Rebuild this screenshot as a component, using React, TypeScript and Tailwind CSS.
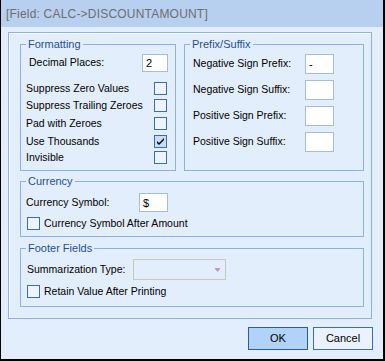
import React from "react";

const Check = ({ checked }: { checked?: boolean }) => (
  <div
    className={
      "w-[13px] h-[13px] border border-[#3a6ea5] flex items-center justify-center shrink-0 " +
      (checked ? "bg-[#c6dbf6]" : "bg-[#eef4fd]")
    }
  >
    {checked && (
      <svg width="9" height="9" viewBox="0 0 9 9">
        <path d="M1 4 L3 6 L8 1 L8 3 L3 8 L1 6 Z" fill="#000" />
      </svg>
    )}
  </div>
);

const Legend = ({ children }: { children: React.ReactNode }) => (
  <legend className="ml-[5px] px-[2px] text-[11px] leading-[13px] text-[#1f4f8e]">{children}</legend>
);

const Box = ({ w, h, v }: { w: string; h: string; v?: string }) => (
  <div className={`${w} ${h} bg-white border border-[#a8bcd6] text-[11px] leading-[16px] pl-[3px] flex items-center`}>{v}</div>
);

export default function App() {
  const fmtRows: [string, boolean, string][] = [
    ["Suppress Zero Values", false, "mt-[10px]"],
    ["Suppress Trailing Zeroes", false, "mt-[4px]"],
    ["Pad with Zeroes", false, "mt-[5px]"],
    ["Use Thousands", true, "mt-[5px]"],
    ["Invisible", false, "mt-[3px]"],
  ];
  const psRows: [string, string, string][] = [
    ["Negative Sign Prefix:", "-", "mt-[3px]"],
    ["Negative Sign Suffix:", "", "mt-[6px]"],
    ["Positive Sign Prefix:", "", "mt-[6px]"],
    ["Positive Sign Suffix:", "", "mt-[6px]"],
  ];
  return (
    <div className="w-[385px] h-[361px] bg-[#e3eefd] border-l border-r-2 border-b-2 border-black flex flex-col font-['Liberation_Sans',Arial,sans-serif] text-black">
      <div className="h-[27px] shrink-0 bg-[#b7d0f0] pl-[5px] flex items-center text-[12px] tracking-[0.2px] text-[#6e6e6e]">
        [Field: CALC-&gt;DISCOUNTAMOUNT]
      </div>
      <div className="pl-[7px] pt-[5px]">
        <div className="w-[364px] h-[287px] border border-[#8fb0e2] shadow-[inset_1px_1px_0_#ffffff] pl-[11px] pt-[5px] flex flex-col">
          <div className="flex gap-[8px]">
            <fieldset className="w-[156px] h-[133px] border border-[#8fb0e2]">
              <Legend>Formatting</Legend>
              <div className="mt-[3px] h-[18px] flex items-center justify-between pl-[8px] pr-[7px] text-[10.5px]">
                <span>Decimal Places:</span>
                <Box w="w-[26px]" h="h-[18px]" v="2" />
              </div>
              {fmtRows.map(([label, c, mt]) => (
                <div key={label} className={`${mt} h-[13px] flex items-center justify-between pl-[5px] pr-[8px] text-[10.5px] leading-[13px]`}>
                  <span>{label}</span>
                  <Check checked={c} />
                </div>
              ))}
            </fieldset>
            <fieldset className="w-[180px] h-[133px] border border-[#8fb0e2]">
              <Legend>Prefix/Suffix</Legend>
              {psRows.map(([label, v, mt]) => (
                <div key={label} className={`${mt} h-[20px] flex items-center pl-[8px] text-[10.5px]`}>
                  <span className="w-[112px]">{label}</span>
                  <Box w="w-[29px]" h="h-[20px]" v={v} />
                </div>
              ))}
            </fieldset>
          </div>
          <fieldset className="mt-[4px] w-[344px] h-[62px] border border-[#8fb0e2]">
            <Legend>Currency</Legend>
            <div className="mt-[5px] h-[19px] flex items-center pl-[5px] text-[10.5px]">
              <span className="w-[113px]">Currency Symbol:</span>
              <Box w="w-[29px]" h="h-[19px]" v="$" />
            </div>
            <div className="mt-[5px] h-[13px] flex items-center pl-[6px] gap-[4px] text-[10.5px] leading-[13px]">
              <Check />
              <span>Currency Symbol After Amount</span>
            </div>
          </fieldset>
          <fieldset className="mt-[5px] w-[344px] h-[65px] border border-[#8fb0e2]">
            <Legend>Footer Fields</Legend>
            <div className="mt-[4px] h-[21px] flex items-center pl-[6px] text-[10.5px]">
              <span className="w-[106px]">Summarization Type:</span>
              <div className="w-[93px] h-[21px] border border-[#c9c9ba] flex items-center justify-end pr-[5px]">
                <svg width="5" height="4" viewBox="0 0 5 4">
                  <rect x="0" y="0" width="5" height="1" fill="#c691c6" />
                  <path d="M0 1 H5 L2.5 4 Z" fill="#c691c6" />
                </svg>
              </div>
            </div>
            <div className="mt-[5px] h-[13px] flex items-center pl-[6px] gap-[4px] text-[10.5px] leading-[13px]">
              <Check />
              <span>Retain Value After Printing</span>
            </div>
          </fieldset>
        </div>
      </div>
      <div className="flex justify-end gap-[5px] pr-[10px] mt-[8px]">
        <button className="w-[60px] h-[23px] bg-[#b1d2f9] border border-[#2c5d92] text-[11px]">OK</button>
        <button className="w-[60px] h-[23px] bg-[#eaf2fd] border border-[#3b6fa8] text-[11px]">Cancel</button>
      </div>
    </div>
  );
}
